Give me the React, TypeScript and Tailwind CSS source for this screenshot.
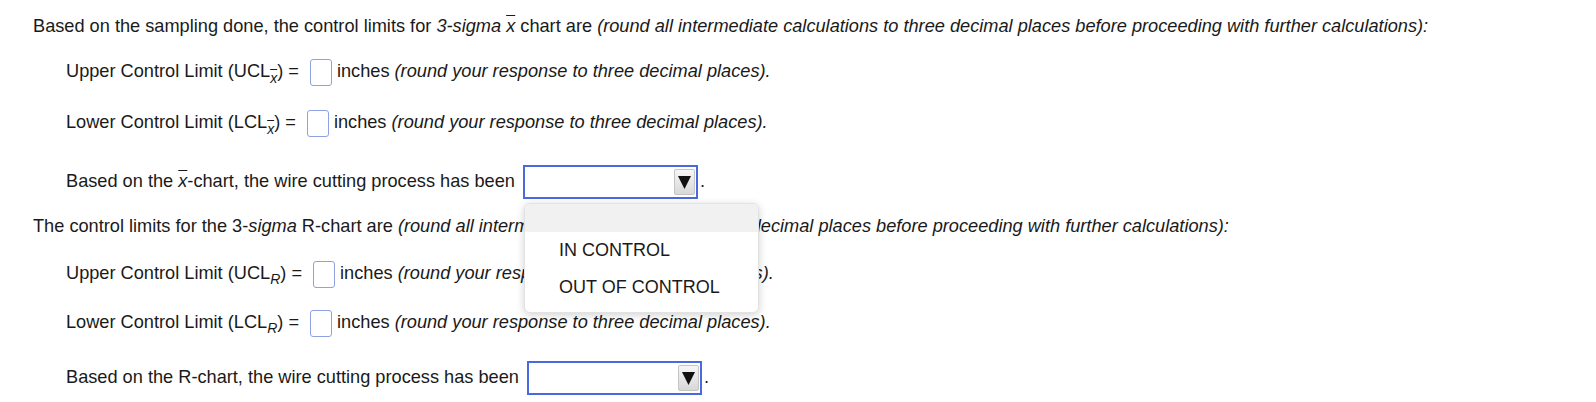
import React from "react";

const Box = () => (
  <span className="inline-block w-[22px] h-[27px] border border-[#8ea2e2] rounded-[3px] bg-white ml-[11px] mr-[5px] shrink-0" />
);

const Select = () => (
  <span className="inline-flex items-center justify-end w-[175px] h-[34px] border-2 border-[#4a68e0] bg-white ml-[8px] mr-[2px] pr-[1px] shrink-0">
    <span className="flex items-center justify-center w-[21px] h-[26px] bg-gradient-to-b from-[#f6f6f6] to-[#d8d8d8] border border-[#c4c4c4] rounded-[2px]">
      <svg width="13" height="13" viewBox="0 0 13 13">
        <polygon points="0,0 13,0 6.5,13" fill="#111" />
      </svg>
    </span>
  </span>
);

const XBar = ({ sub = false }: { sub?: boolean }) =>
  sub ? (
    <span className="relative top-[6px] text-[14px] italic overline leading-none">x</span>
  ) : (
    <span className="italic overline">x</span>
  );

export default function App() {
  return (
    <div
      className="relative w-[1596px] h-[402px] bg-white text-[#1a1a1a] text-[18.2px] overflow-hidden"
      style={{ fontFamily: '"Liberation Sans", Arial, sans-serif' }}
    >
      <div className="flex flex-col pl-[33px] pt-[9px]">
        <div className="h-[36px] flex items-center whitespace-pre">
          <span>Based on the sampling done, the control limits for </span>
          <span className="italic">3-sigma </span>
          <XBar />
          <span> chart are </span>
          <span className="italic">(round all intermediate calculations to three decimal places before proceeding with further calculations):</span>
        </div>

        <div className="h-[36px] mt-[9px] pl-[33px] flex items-center whitespace-pre">
          <span>Upper Control Limit (UCL</span>
          <XBar sub />
          <span>) =</span>
          <Box />
          <span>inches </span>
          <span className="italic">(round your response to three decimal places).</span>
        </div>

        <div className="h-[36px] mt-[15px] pl-[33px] flex items-center whitespace-pre">
          <span>Lower Control Limit (LCL</span>
          <XBar sub />
          <span>) =</span>
          <Box />
          <span>inches </span>
          <span className="italic">(round your response to three decimal places).</span>
        </div>

        <div className="h-[36px] mt-[23px] pl-[33px] flex items-center whitespace-pre">
          <span>Based on the </span>
          <XBar />
          <span>-chart, the wire cutting process has been</span>
          <Select />
          <span>.</span>
        </div>

        <div className="h-[36px] mt-[9px] flex items-center whitespace-pre">
          <span>The control limits for the 3-</span>
          <span className="italic">sigma</span>
          <span> R-chart are </span>
          <span className="italic">(round all intermediate calculations to three decimal places before proceeding with further calculations):</span>
        </div>

        <div className="h-[36px] mt-[11px] pl-[33px] flex items-center whitespace-pre">
          <span>Upper Control Limit (UCL</span>
          <span className="relative top-[5px] text-[14px] italic leading-none">R</span>
          <span>) =</span>
          <Box />
          <span>inches </span>
          <span className="italic">(round your response to three decimal places).</span>
        </div>

        <div className="h-[36px] mt-[13px] pl-[33px] flex items-center whitespace-pre">
          <span>Lower Control Limit (LCL</span>
          <span className="relative top-[5px] text-[14px] italic leading-none">R</span>
          <span>) =</span>
          <Box />
          <span>inches </span>
          <span className="italic">(round your response to three decimal places).</span>
        </div>

        <div className="h-[36px] mt-[19px] pl-[33px] flex items-center whitespace-pre">
          <span>Based on the R-chart, the wire cutting process has been</span>
          <Select />
          <span>.</span>
        </div>
      </div>

      <div className="absolute left-[524px] top-[203px] w-[235px] h-[110px] bg-white rounded-[6px] border border-[#e2e2e2] shadow-[0_2px_8px_rgba(0,0,0,0.18)] overflow-hidden text-[18px]">
        <div className="h-[28px] bg-[#f1f1f1]" />
        <div className="pl-[34px] h-[36px] flex items-center">IN CONTROL</div>
        <div className="pl-[34px] h-[38px] flex items-center">OUT OF CONTROL</div>
      </div>
    </div>
  );
}
